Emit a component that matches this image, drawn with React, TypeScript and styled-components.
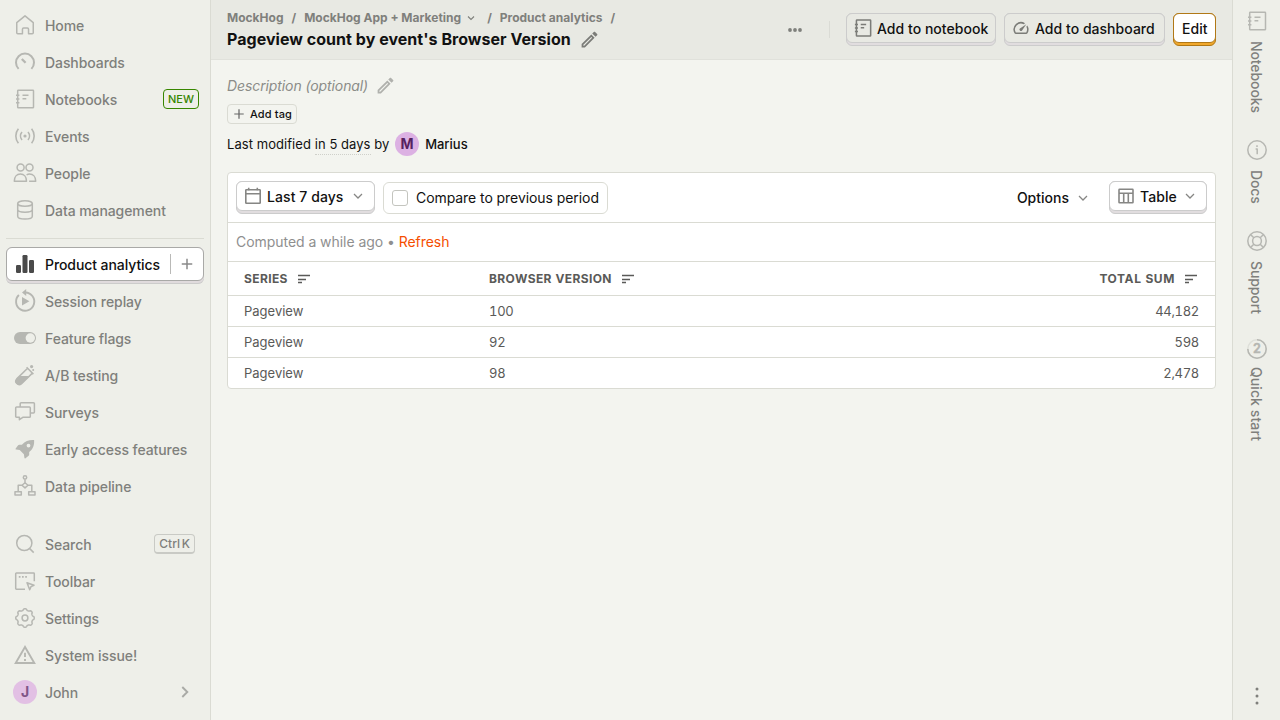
import React from "react";
import styled, { createGlobalStyle, css } from "styled-components";

const c = {
  page: "#f3f4ef",
  side: "#eeefe9",
  header: "#e8e9e3",
  border: "#dadbd3",
  muted: "#7f807c",
  icon: "#b6b7b2",
  text: "#111111",
  cell: "#5a5a58",
};

const Global = createGlobalStyle`
  *, *::before, *::after { box-sizing: border-box; }
  body { margin: 0; background: ${c.page}; font-family: Inter, "Liberation Sans", sans-serif; font-size: 14px; line-height: 20px; color: ${c.text}; }
  button { font: inherit; color: inherit; background: none; border: 0; padding: 0; margin: 0; letter-spacing: inherit; }
  svg { display: block; flex: none; }
`;

/* ---------- icons ---------- */

const Icon = ({ size = 24, sw = 1.5, box = 24, inset = 0, children }: { size?: number; sw?: number; box?: number; inset?: number; children: React.ReactNode }) => (
  <svg width={size} height={size} viewBox={`${inset} ${inset} ${box - 2 * inset} ${box - 2 * inset}`} fill="none" stroke="currentColor" strokeWidth={sw} strokeLinejoin="round">
    {children}
  </svg>
);

const HomeIcon = () => (
  <Icon>
    <path d="M3.75 9.6 12 2.8l8.25 6.8v10.2a1 1 0 0 1-1 1h-3.7v-4.6a1.2 1.2 0 0 0-1.2-1.2h-3.7a1.2 1.2 0 0 0-1.2 1.2v4.6H4.75a1 1 0 0 1-1-1z" />
  </Icon>
);
const GaugeIcon = () => (
  <Icon sw={2}>
    <path d="M5.600 18.900A9 9 0 1 1 18.400 18.900" />
    <path d="M8.800 9l3.800 3.800" strokeWidth="2.300" />
  </Icon>
);
const NotebookIcon = ({ size = 24, inset = 0 }: { size?: number; inset?: number }) => (
  <Icon size={size} inset={inset} sw={inset ? 1.700 : 1.500}>
    <rect x="4.7" y="3.2" width="15.8" height="17.6" rx=".6" />
    <path d="M3 8.2h3.4M3 12h3.4M3 15.8h3.4M9.5 8.2h6M9.5 11.8h3.8" />
  </Icon>
);
const EventsIcon = () => (
  <Icon sw={1.6}>
    <path d="M5.4 4.8a11.4 11.4 0 0 0 0 14.4M18.6 4.8a11.4 11.4 0 0 1 0 14.4M9 8a6.2 6.2 0 0 0 0 8M15 8a6.2 6.2 0 0 1 0 8" />
    <circle cx="12" cy="12" r="1.6" fill="currentColor" stroke="none" />
  </Icon>
);
const PeopleIcon = () => (
  <Icon>
    <circle cx="7.6" cy="6.6" r="3.5" />
    <circle cx="16.5" cy="6.6" r="3.5" />
    <path d="M1.3 20.2c0-4.4 2.5-7.2 6.1-7.2s6.1 2.8 6.1 7.2zM13.6 13.8c.9-.5 1.8-.8 2.9-.8 3.6 0 6.2 2.8 6.2 7.2h-6.6" />
  </Icon>
);
const DatabaseIcon = () => (
  <Icon>
    <ellipse cx="12" cy="5.5" rx="7.3" ry="2.8" />
    <path d="M4.7 5.5v12.8c0 1.6 3.2 2.8 7.3 2.8s7.3-1.2 7.3-2.8V5.500M4.700 11.500c0 1.600 3.200 2.700 7.300 2.700s7.300-1.100 7.300-2.700" />
  </Icon>
);
const ChartIcon = () => (
  <Icon>
    <g fill="currentColor" stroke="none">
      <rect x="3" y="13" width="5" height="8" rx="1.2" />
      <rect x="9.500" y="3" width="5" height="18" rx="1.2" />
      <rect x="16" y="8" width="5" height="13" rx="1.2" />
    </g>
  </Icon>
);
const ReplayIcon = () => (
  <Icon sw={1.9}>
    <path d="M12.500 3.500a9.100 9.100 0 1 1-6.600 2.500" />
    <path d="M13.200 0v7L9 3.500z" fill="currentColor" stroke="none" />
    <path d="M9 8v8.600l7.400-4.300z" fill="currentColor" stroke="none" />
  </Icon>
);
const ToggleIcon = () => (
  <Icon>
    <rect x="1" y="6" width="22" height="12" rx="6" fill="currentColor" stroke="none" />
    <circle cx="17.300" cy="12" r="4.700" fill={c.side} stroke="none" />
  </Icon>
);
const FlaskIcon = () => (
  <Icon>
    <path d="M13.600 4.300l6.800 6.800M14.600 5.300 3.700 15.900a3.400 3.400 0 0 0 4.800 4.800L19.400 10.100" />
    <path d="M6.800 12.900h9.800l-8 8a3.400 3.400 0 0 1-4.900-5z" fill="currentColor" stroke="none" />
    <circle cx="18.600" cy="3.600" r="1.600" fill="currentColor" stroke="none" />
    <circle cx="20.200" cy="7" r="1" fill="currentColor" stroke="none" />
  </Icon>
);
const SurveyIcon = () => (
  <Icon>
    <path d="M7.200 7V3.700a.9.900 0 0 1 .9-.9h12.400a.9.900 0 0 1 .9.900v8.400a.9.900 0 0 1-.9.900h-3" />
    <path d="M3.600 7h12.800a.9.900 0 0 1 .9.900v8.500a.9.900 0 0 1-.9.900H9.800l-3.400 2.400v-2.400H3.600a.9.900 0 0 1-.9-.9V7.900a.9.900 0 0 1 .9-.9z" />
  </Icon>
);
const RocketIcon = () => (
  <Icon>
    <path fillRule="evenodd" fill="currentColor" stroke="none" d="M21.100 3c.3 4.700-.7 8.700-4.900 12v2.600c0 .5-.2.900-.6 1.200l-3.100 2.400c-.5.400-1 .1-1.100-.5l-.5-3.500-4.200-4.200-3.500-.5c-.6-.1-.8-.700-.5-1.100l2.400-3.100c.3-.4.700-.6 1.200-.6h2.600C12.400 3.700 16.400 2.700 21.100 3zM15.500 6.700a1.900 1.900 0 1 0 0 3.800 1.900 1.900 0 0 0 0-3.800z" />
  </Icon>
);
const PipelineIcon = () => (
  <Icon>
    <circle cx="12" cy="3.400" r="1.700" />
    <path d="M12 5.200v4M12 8.700 15 11.300 12 13.900 9 11.300zM9 11.300H5.200v6.400M15 11.300h3.800v6.400" />
    <rect x="2" y="17.700" width="6.300" height="3.400" />
    <rect x="15.700" y="17.700" width="6.300" height="3.400" />
  </Icon>
);
const SearchIcon = () => (
  <Icon>
    <circle cx="11.300" cy="11" r="7.600" />
    <path d="M16.700 16.600l4 4" />
  </Icon>
);
const ToolbarIcon = () => (
  <Icon>
    <path d="M12 20.200H3.400a.7.700 0 0 1-.7-.7V4.700a.7.700 0 0 1 .7-.7h17.200a.7.700 0 0 1 .7.700v7.600" />
    <path d="M5.800 7.900h1.700M9 7.900h1.700M12.200 7.900h1.700" strokeWidth="1.700" />
    <path d="M14 13.800l7 2.400-3 1.400-1.300 3.200z" />
  </Icon>
);

/* Outline of a cog with eight soft teeth around (12, 12). */
const cogPath =
  Array.from({ length: 128 }, (_, i) => {
    const a = (i / 128) * Math.PI * 2;
    const r = 8.5 + 0.8 * Math.tanh(1.6 * Math.cos(8 * a));
    return `${i ? "L" : "M"}${(12 + r * Math.sin(a)).toFixed(2)} ${(12 - r * Math.cos(a)).toFixed(2)}`;
  }).join("") + "z";

const GearIcon = () => (
  <Icon>
    <path d={cogPath} />
    <circle cx="12" cy="12" r="2.900" />
  </Icon>
);
const WarningIcon = () => (
  <Icon sw={1.900}>
    <path d="M12 3.900 2.700 20h18.600z" strokeLinejoin="miter" />
    <path d="M12 9.800v4.200M12 15.900v2" />
  </Icon>
);
const InfoIcon = () => (
  <Icon>
    <circle cx="12" cy="12" r="9.200" />
    <path d="M10.600 10.900h1.600v5.300M12 7.200v1.700" />
  </Icon>
);
const SupportIcon = () => (
  <Icon>
    <circle cx="12" cy="12" r="9.200" />
    <circle cx="12" cy="12" r="4.400" />
    <path d="M5.500 5.500l3.300 3.300M18.500 5.500l-3.300 3.300M5.500 18.500l3.300-3.300M18.500 18.500l-3.300-3.300" />
  </Icon>
);
const ProgressIcon = () => (
  <Icon>
    <circle cx="12" cy="12" r="9.200" stroke="#dedfd9" />
    <path d="M12 2.800A9.200 9.200 0 1 1 2.800 12" />
    <text x="12" y="16.400" textAnchor="middle" fontSize="12.500" fontWeight="700" fill="currentColor" stroke="currentColor" strokeWidth="0.300">2</text>
  </Icon>
);
const PencilIcon = () => (
  <Icon size={21}>
    <path fill="currentColor" stroke="none" d="M14.060 9.020l.92.920L5.920 19H5v-.92l9.060-9.060M17.660 3c-.25 0-.51.100-.7.290l-1.830 1.830 3.750 3.750 1.830-1.830a.996.996 0 0 0 0-1.410l-2.340-2.340c-.2-.2-.45-.29-.71-.29zm-3.600 3.190L3 17.250V21h3.750L17.810 9.940l-3.750-3.750z" />
  </Icon>
);
const ChevronDown = ({ size = 16 }: { size?: number }) => (
  <Icon size={size} box={16} sw={size < 16 ? 1.500 : 1.250}>
    <path d="M4 6 8 10 12 6" strokeLinejoin="miter" />
  </Icon>
);
const ChevronRight = () => (
  <Icon size={16} box={16} sw={1.900}>
    <path d="M5.300 3 10.300 8 5.300 13" strokeLinejoin="miter" />
  </Icon>
);
const PlusIcon = ({ size = 20, sw = 1.200 }: { size?: number; sw?: number }) => (
  <Icon size={size} box={16} sw={sw}>
    <path d="M8 3.800v8.400M3.800 8h8.400" />
  </Icon>
);
const DotsIcon = ({ vertical }: { vertical?: boolean }) => (
  <Icon size={20} box={20}>
    <g fill="currentColor" stroke="none" transform={vertical ? "rotate(90 10 10)" : undefined}>
      <circle cx={vertical ? 3 : 5} cy="10" r={vertical ? 1.500 : 1.900} />
      <circle cx="10" cy="10" r={vertical ? 1.500 : 1.900} />
      <circle cx={vertical ? 17 : 15} cy="10" r={vertical ? 1.500 : 1.900} />
    </g>
  </Icon>
);
const SpeedIcon = () => (
  <Icon size={18}>
    <path fill="currentColor" stroke="none" d="m20.380 8.570-1.230 1.850a8 8 0 0 1-.22 7.580H5.070A8 8 0 0 1 15.580 6.850l1.850-1.230A10 10 0 0 0 3.350 19a2 2 0 0 0 1.720 1h13.850a2 2 0 0 0 1.740-1 10 10 0 0 0-.27-10.440zm-9.790 6.840a2 2 0 0 0 2.830 0l5.660-8.490-8.490 5.660a2 2 0 0 0 0 2.830z" />
  </Icon>
);
const CalendarIcon = () => (
  <Icon size={18} box={18} sw={1.600}>
    <rect x="1.800" y="2.700" width="14.400" height="13.600" rx=".6" />
    <path d="M1.800 6.700h14.400M4.700.800v2.500M13.300.800v2.500" />
  </Icon>
);
const TableIcon = () => (
  <Icon size={18} box={18} sw={1.600}>
    <rect x="2" y="2.300" width="14" height="13.500" rx=".6" />
    <path d="M2 6.300h14M6.700 6.300v9.500M11.300 6.300v9.500" />
  </Icon>
);
const SortIcon = () => (
  <Icon size={16} box={16}>
    <path d="M2 4.500h12M2 8.500h8M2 11.500h4" strokeWidth="1.300" />
  </Icon>
);

/* ---------- shell ---------- */

const Shell = styled.div`
  display: flex;
  width: 1280px;
  height: 720px;
  overflow: hidden;
`;

const Sidebar = styled.nav`
  width: 211px;
  flex: none;
  display: flex;
  flex-direction: column;
  justify-content: space-between;
  padding: 8px 6px;
  background: ${c.side};
  border-right: 1px solid ${c.border};
`;

const NavGroup = styled.div`
  display: flex;
  flex-direction: column;
`;

const NavDivider = styled.div`
  height: 1px;
  margin: 8px 0;
  background: ${c.border};
`;

const NavFace = styled.button<{ $active?: boolean }>`
  display: flex;
  align-items: center;
  gap: 8px;
  width: 198px;
  height: 34px;
  padding: 0 ${(p) => (p.$active ? 6 : 7)}px;
  border-radius: 6px;
  color: ${(p) => (p.$active ? c.text : c.muted)};
  font-weight: 500;
  text-align: left;
  ${(p) =>
    p.$active &&
    css`
      background: #fff;
      border: 1px solid #a9a9a7;
    `}
  > svg { color: ${(p) => (p.$active ? "#4a4a4a" : c.icon)}; }
`;

const NavSlot = styled.div<{ $active?: boolean }>`
  height: 37px;
  width: 198px;
  border-radius: 6px;
  ${(p) => p.$active && css`background: #e0dbdd; box-shadow: inset 0 -1px 0 #cccccb;`}
`;

const NavLabel = styled.span`
  flex: 1;
  padding-top: 1px;
  letter-spacing: -0.080px;
  white-space: nowrap;
`;

const NewBadge = styled.span`
  height: 20px;
  margin-right: -2px;
  padding: 0 4px;
  border: 1px solid #388600;
  border-radius: 4px;
  color: #388600;
  font-size: 11px;
  line-height: 18px;
`;

const Keys = styled.kbd`
  height: 20px;
  margin-right: 2px;
  padding: 0 4px;
  border: 1px solid #c9cac5;
  border-bottom-width: 2px;
  border-radius: 4px;
  font: 500 12px/17px Inter, sans-serif;
  word-spacing: -1.500px;
`;

const SideAction = styled.span`
  display: flex;
  align-items: center;
  justify-content: center;
  width: 33px;
  height: 20px;
  margin-right: -6px;
  border-left: 1px solid #b9b9b7;
  color: #8a8a8a;
`;

const Avatar = styled.span<{ $soft?: boolean }>`
  display: flex;
  align-items: center;
  justify-content: center;
  width: 24px;
  height: 24px;
  border-radius: 50%;
  background: ${(p) => (p.$soft ? "#e2c0e4" : "#dcb1e3")};
  color: ${(p) => (p.$soft ? "#805587" : "#572260")};
  font-size: 14px;
  font-weight: 700;
`;

const ChevronSlot = styled.span`
  display: flex;
  margin-right: 4px;
  color: #a9aaa6;
`;

/* ---------- header ---------- */

const Main = styled.main`
  flex: 1;
  min-width: 0;
  display: flex;
  flex-direction: column;
`;

const Header = styled.header`
  display: flex;
  justify-content: space-between;
  height: 60px;
  padding: 0 16px;
  background: ${c.header};
  border-bottom: 1px solid #e0e1db;
`;

const Titles = styled.div`
  display: flex;
  flex-direction: column;
  padding-top: 9px;
`;

const Crumbs = styled.div`
  display: flex;
  align-items: center;
  height: 18px;
  color: ${c.muted};
  font-size: 12px;
  font-weight: 700;
`;

const Slash = styled.span<{ $wide?: boolean }>`
  margin: 0 8px 0 ${(p) => (p.$wide ? 9 : 8)}px;
`;

const CrumbChevron = styled.span`
  margin: 0 1px 0 4px;
`;

const TitleRow = styled.h1`
  display: flex;
  align-items: center;
  gap: 8px;
  height: 24px;
  margin: 0;
  font-size: 16px;
  font-weight: 700;
  letter-spacing: 0.040px;
  svg { color: #7b7c78; margin-top: 1px; }
`;

const Actions = styled.div`
  display: flex;
  gap: 8px;
  padding-top: 13px;
`;

const MoreButton = styled.button`
  display: flex;
  align-items: center;
  height: 33px;
  color: ${c.muted};
`;

const Rule = styled.span`
  width: 1px;
  height: 17px;
  margin: 8px 8px 0 16px;
  background: #dadbd5;
`;

const Depth = styled.span<{ $primary?: boolean }>`
  display: flex;
  flex: none;
  height: 33px;
  border: 1px solid ${(p) => (p.$primary ? "#b17816" : "#cccccc")};
  border-radius: 6px;
  background: ${(p) => (p.$primary ? "#f1a82c" : "#e1dddf")};
`;

const Face = styled.button<{ $primary?: boolean; $white?: boolean; $w: number }>`
  display: flex;
  align-items: center;
  gap: 5px;
  width: ${(p) => p.$w}px;
  height: 30px;
  margin: -1px;
  padding: 0 ${(p) => (p.$primary ? 8 : 7)}px;
  border: 1px solid ${(p) => (p.$primary ? "#b17816" : "#cccccc")};
  border-radius: 6px;
  background: ${(p) => (p.$white || p.$primary ? "#fff" : c.header)};
  font-weight: 500;
  letter-spacing: ${(p) => (p.$white ? 0.080 : 0.030)}px;
  white-space: nowrap;
  > svg { color: ${(p) => (p.$white ? "#868684" : "#7b7c78")}; }
  > svg:last-child { margin-left: auto; margin-right: 1px; }
  > span { padding-top: 1px; }
`;

/* ---------- body ---------- */

const Content = styled.section`
  display: flex;
  flex-direction: column;
  align-items: flex-start;
  padding: 16px 16px 0;
`;

const Description = styled.div`
  display: flex;
  align-items: center;
  gap: 7px;
  height: 20px;
  color: #8b8c88;
  font-style: italic;
  letter-spacing: -0.100px;
  svg { color: #b0b1ad; margin-top: -1px; }
`;

const TagButton = styled.button`
  display: flex;
  align-items: center;
  gap: 2px;
  width: 70px;
  height: 20px;
  margin-top: 8px;
  padding: 0 2px;
  border: 1px solid ${c.border};
  border-radius: 4px;
  font-size: 11px;
  font-weight: 500;
  letter-spacing: 0.120px;
  white-space: nowrap;
  svg { color: #666; }
`;

const Modified = styled.div`
  display: flex;
  align-items: center;
  height: 24px;
  margin-top: 8px;
  font-size: 13px;
  letter-spacing: 0.060px;
  white-space: pre;
`;

const When = styled.span`
  border-bottom: 1px dotted #cfd0ca;
  margin-top: 1px;
`;

const By = styled.span`
  margin-right: 2px;
`;

const Author = styled.span`
  margin-left: 6px;
  font-weight: 500;
  letter-spacing: 0;
`;

const Card = styled.div`
  width: 989px;
  margin-top: 16px;
  border: 1px solid ${c.border};
  border-radius: 4px;
  background: #fff;
  overflow: hidden;
`;

const Filters = styled.div`
  display: flex;
  gap: 8px;
  height: 50px;
  padding: 8px;
  border-bottom: 1px solid ${c.border};
`;

const Compare = styled.label`
  display: flex;
  align-items: center;
  gap: 8px;
  width: 225px;
  height: 32px;
  margin-top: 1px;
  padding: 0 8px;
  border: 1px solid ${c.border};
  border-radius: 6px;
  letter-spacing: -0.070px;
  white-space: nowrap;
`;

const Box = styled.span`
  flex: none;
  width: 16px;
  height: 16px;
  border: 1px solid #c4c5bf;
  border-radius: 3px;
`;

const OptionsButton = styled.button`
  display: flex;
  align-items: center;
  gap: 6px;
  height: 33px;
  margin-left: auto;
  margin-right: 10px;
  font-weight: 500;
  svg { color: #868684; }
`;

const Computed = styled.div`
  height: 39px;
  padding: 0 8px;
  border-bottom: 1px solid ${c.border};
  color: #8f8f8f;
  letter-spacing: -0.050px;
  line-height: 38px;
`;

const Refresh = styled.a`
  color: #f54e00;
`;

const Table = styled.table`
  width: 100%;
  table-layout: fixed;
  border-collapse: separate;
  border-spacing: 0;
  color: ${c.cell};
  font-size: 13px;
  font-variant-numeric: tabular-nums;
  line-height: 18px;
`;

const Th = styled.th<{ $right?: boolean }>`
  height: 34px;
  padding: 0 16px;
  border-bottom: 1px solid ${c.border};
  font-size: 12px;
  font-weight: 700;
  letter-spacing: ${(p) => (p.$right ? 0.600 : 0.380)}px;
  > div {
    display: flex;
    align-items: center;
    gap: 8px;
    justify-content: ${(p) => (p.$right ? "flex-end" : "flex-start")};
  }
`;

const Td = styled.td<{ $right?: boolean; $number?: boolean }>`
  height: 31px;
  padding: 0 16px;
  border-bottom: 1px solid ${c.border};
  letter-spacing: ${(p) => (p.$number ? -0.300 : 0)}px;
  text-align: ${(p) => (p.$right ? "right" : "left")};
  tr:last-child > & { height: 30px; border-bottom: 0; }
`;

/* ---------- right rail ---------- */

const Rail = styled.aside`
  display: flex;
  flex: none;
  flex-direction: column;
  align-items: center;
  width: 48px;
  padding: 9px 0 14px;
  background: ${c.side};
  border-left: 1px solid ${c.border};
`;

const RailItem = styled.button<{ $h: number; $gap?: number; $spacing?: number }>`
  display: flex;
  flex-direction: column;
  align-items: center;
  gap: ${(p) => p.$gap ?? 8}px;
  height: ${(p) => p.$h}px;
  color: ${c.muted};
  font-weight: 500;
  svg { color: ${c.icon}; }
  span { writing-mode: vertical-rl; white-space: nowrap; line-height: 20px; letter-spacing: ${(p) => p.$spacing ?? -0.100}px; margin-right: 1px; }
`;

const RailMore = styled.span`
  margin-top: auto;
  color: ${c.muted};
`;

type NavEntry = { label: string; icon: React.ReactNode; active?: boolean; extra?: React.ReactNode };

const primary: NavEntry[] = [
  { label: "Home", icon: <HomeIcon /> },
  { label: "Dashboards", icon: <GaugeIcon /> },
  { label: "Notebooks", icon: <NotebookIcon />, extra: <NewBadge>NEW</NewBadge> },
  { label: "Events", icon: <EventsIcon /> },
  { label: "People", icon: <PeopleIcon /> },
  { label: "Data management", icon: <DatabaseIcon /> },
];

const products: NavEntry[] = [
  { label: "Product analytics", icon: <ChartIcon />, active: true, extra: <SideAction><PlusIcon /></SideAction> },
  { label: "Session replay", icon: <ReplayIcon /> },
  { label: "Feature flags", icon: <ToggleIcon /> },
  { label: "A/B testing", icon: <FlaskIcon /> },
  { label: "Surveys", icon: <SurveyIcon /> },
  { label: "Early access features", icon: <RocketIcon /> },
  { label: "Data pipeline", icon: <PipelineIcon /> },
];

const footer: NavEntry[] = [
  { label: "Search", icon: <SearchIcon />, extra: <Keys>Ctrl K</Keys> },
  { label: "Toolbar", icon: <ToolbarIcon /> },
  { label: "Settings", icon: <GearIcon /> },
  { label: "System issue!", icon: <WarningIcon /> },
  { label: "John", icon: <Avatar $soft>J</Avatar>, extra: <ChevronSlot><ChevronRight /></ChevronSlot> },
];

const NavItem = ({ label, icon, active, extra }: NavEntry) => (
  <NavSlot $active={active}>
    <NavFace $active={active}>
      {icon}
      <NavLabel>{label}</NavLabel>
      {extra}
    </NavFace>
  </NavSlot>
);

const rows = [
  ["Pageview", "100", "44,182"],
  ["Pageview", "92", "598"],
  ["Pageview", "98", "2,478"],
];

export default function App() {
  return (
    <Shell>
      <Global />
      <Sidebar>
        <NavGroup>
          {primary.map((n) => <NavItem key={n.label} {...n} />)}
          <NavDivider />
          {products.map((n) => <NavItem key={n.label} {...n} />)}
        </NavGroup>
        <NavGroup>
          {footer.map((n) => <NavItem key={n.label} {...n} />)}
        </NavGroup>
      </Sidebar>

      <Main>
        <Header>
          <Titles>
            <Crumbs>
              <span>MockHog</span>
              <Slash>/</Slash>
              <span>MockHog App + Marketing</span>
              <CrumbChevron><ChevronDown size={12} /></CrumbChevron>
              <Slash $wide>/</Slash>
              <span>Product analytics</span>
              <Slash>/</Slash>
            </Crumbs>
            <TitleRow>
              <span>Pageview count by event's Browser Version</span>
              <PencilIcon />
            </TitleRow>
          </Titles>
          <Actions>
            <MoreButton aria-label="More"><DotsIcon /></MoreButton>
            <Rule />
            <Depth><Face $w={150}><NotebookIcon size={18} inset={2} /><span>Add to notebook</span></Face></Depth>
            <Depth><Face $w={161}><SpeedIcon /><span>Add to dashboard</span></Face></Depth>
            <Depth $primary><Face $primary $w={43}><span>Edit</span></Face></Depth>
          </Actions>
        </Header>

        <Content>
          <Description>
            <span>Description (optional)</span>
            <PencilIcon />
          </Description>
          <TagButton><PlusIcon size={18} sw={1.100} />Add tag</TagButton>
          <Modified>
            <span>Last modified </span>
            <When>in 5 days</When>
            <By> by </By>
            <Avatar>M</Avatar>
            <Author>Marius</Author>
          </Modified>

          <Card>
            <Filters>
              <Depth><Face $white $w={139}><CalendarIcon /><span>Last 7 days</span><ChevronDown /></Face></Depth>
              <Compare><Box />Compare to previous period</Compare>
              <OptionsButton>Options<ChevronDown /></OptionsButton>
              <Depth><Face $white $w={98}><TableIcon /><span>Table</span><ChevronDown /></Face></Depth>
            </Filters>
            <Computed>Computed a while ago • <Refresh>Refresh</Refresh></Computed>
            <Table>
              <colgroup>
                <col width={245} />
                <col width={400} />
                <col />
              </colgroup>
              <thead>
                <tr>
                  <Th><div>SERIES<SortIcon /></div></Th>
                  <Th><div>BROWSER VERSION<SortIcon /></div></Th>
                  <Th $right><div>TOTAL SUM<SortIcon /></div></Th>
                </tr>
              </thead>
              <tbody>
                {rows.map(([series, version, total]) => (
                  <tr key={version}>
                    <Td>{series}</Td>
                    <Td $number>{version}</Td>
                    <Td $right $number>{total}</Td>
                  </tr>
                ))}
              </tbody>
            </Table>
          </Card>
        </Content>
      </Main>

      <Rail>
        <RailItem $h={129}><NotebookIcon /><span>Notebooks</span></RailItem>
        <RailItem $h={91}><InfoIcon /><span>Docs</span></RailItem>
        <RailItem $h={108}><SupportIcon /><span>Support</span></RailItem>
        <RailItem $h={120} $gap={6} $spacing={0.080}><ProgressIcon /><span>Quick start</span></RailItem>
        <RailMore><DotsIcon vertical /></RailMore>
      </Rail>
    </Shell>
  );
}
